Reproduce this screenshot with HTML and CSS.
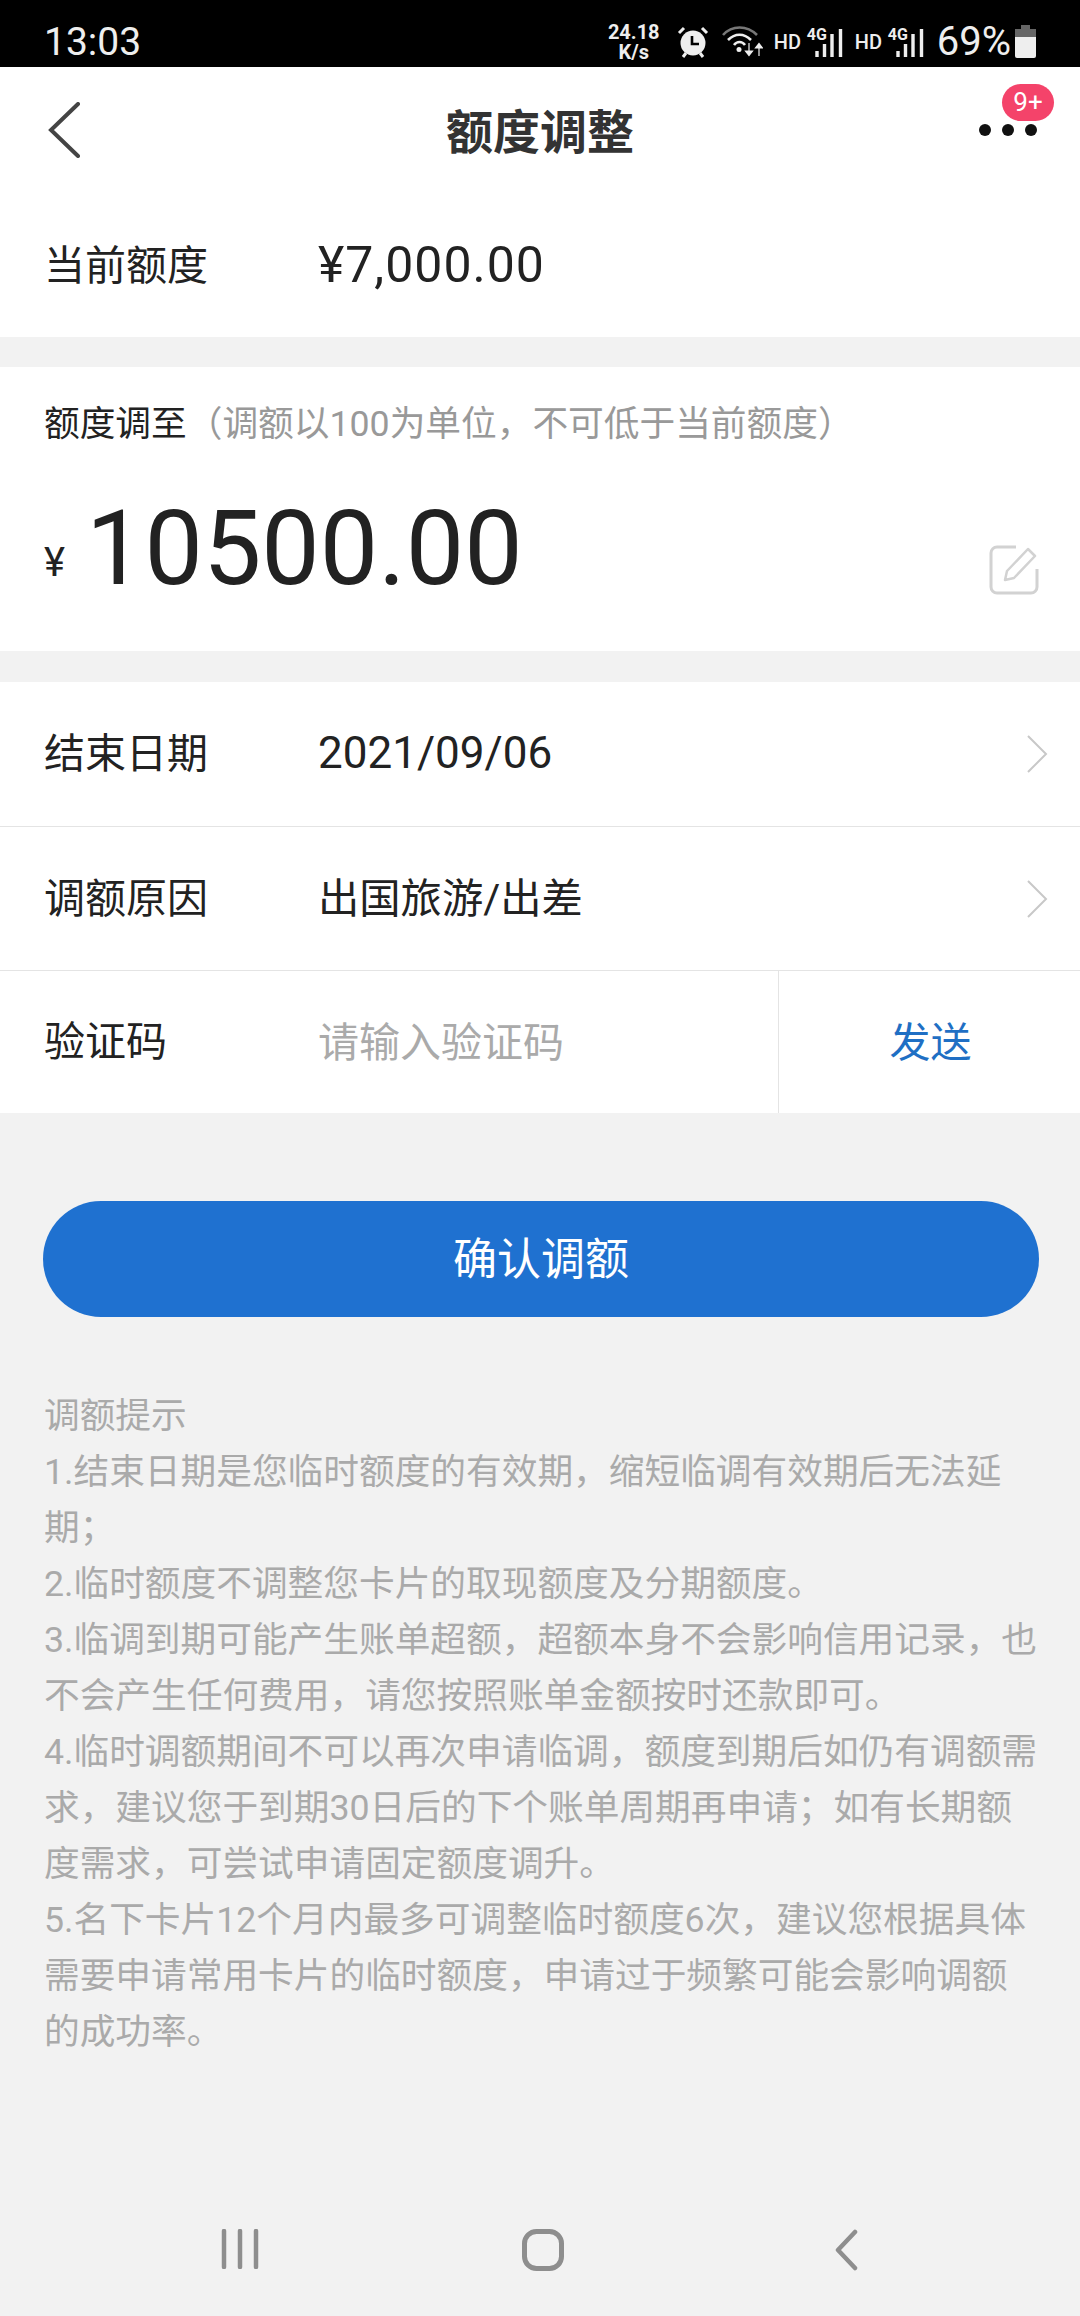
FILE: index.html
```html
<!DOCTYPE html>
<html lang="zh">
<head>
    <meta charset="UTF-8">
    <meta name="viewport" content="width=device-width, initial-scale=1.0">
    <title>额度调整</title>
    <link rel="stylesheet" href="styles.css">
</head>
<body>

    <div class="status-bar">
        <span class="clock">13:03</span>
        <div class="status-icons">
            <div class="net-speed">24.18<br>K/s</div>
            <svg class="alarm" width="32" height="32" viewBox="0 0 32 32">
                <circle cx="16" cy="17" r="12.5" fill="#eee"/>
                <path d="M15 10v8h7" fill="none" stroke="#000" stroke-width="2.6"/>
                <path d="M2 7l5-5M30 7l-5-5" stroke="#eee" stroke-width="3"/>
                <path d="M6 31l3-4M26 31l-3-4" stroke="#eee" stroke-width="3"/>
            </svg>
            <svg class="wifi" width="41" height="32" viewBox="0 0 41 32">
                <path d="M1 9C10 -1 25 -1 35 9" fill="none" stroke="#777" stroke-width="2.6"/>
                <path d="M6 14C13 7 22 7 29 14" fill="none" stroke="#eee" stroke-width="2.6"/>
                <path d="M12 19C15 15 20 15 23 19" fill="none" stroke="#eee" stroke-width="2.6"/>
                <circle cx="17" cy="23.500" r="2.500" fill="#eee"/>
                <path d="M27 17v8M23.500 25h7l-3.500 4.500zM37 30v-8M33.500 22h7l-3.500-4.500z" fill="#eee" stroke="#eee" stroke-width="1.200"/>
            </svg>
            <span class="hd">HD</span>
            <div class="signal">
                <span class="four-g">4G</span>
                <svg width="38" height="32" viewBox="0 0 38 32">
                    <path d="M12 25v6M19.500 18v13M27 8v23M35.500 3v28" stroke="#eee" stroke-width="3.400"/>
                </svg>
            </div>
            <span class="hd">HD</span>
            <div class="signal">
                <span class="four-g">4G</span>
                <svg width="38" height="32" viewBox="0 0 38 32">
                    <path d="M12 25v6M19.500 18v13M27 8v23M35.500 3v28" stroke="#eee" stroke-width="3.400"/>
                </svg>
            </div>
            <span class="battery-text">69%</span>
            <svg class="battery" width="21" height="33" viewBox="0 0 21 33">
                <path d="M6 0h9v4h6v8H0V4h6z" fill="#666"/>
                <path d="M0 12h21v19a2 2 0 0 1-2 2H2a2 2 0 0 1-2-2z" fill="#eee"/>
            </svg>
        </div>
    </div>

    <div class="nav-bar">
        <svg class="back" width="34" height="56" viewBox="0 0 34 56">
            <path d="M31 2L4 28l27 26" fill="none" stroke="#444" stroke-width="4" stroke-linecap="round"/>
        </svg>
        <h1>额度调整</h1>
        <div class="more">
            <i></i><i></i><i></i>
            <span class="badge">9+</span>
        </div>
    </div>

    <div class="row current">
        <span class="label">当前额度</span>
        <span class="current-value">¥7,000.00</span>
    </div>

    <div class="amount-card">
        <div class="amount-title">额度调至<span class="hint">（调额以100为单位，不可低于当前额度）</span></div>
        <div class="amount-row">
            <span class="yen">¥</span>
            <span class="amount">10500.00</span>
            <svg class="edit" width="50" height="50" viewBox="0 0 50 50">
                <path d="M27 2H8a6 6 0 0 0-6 6v34a6 6 0 0 0 6 6h34a6 6 0 0 0 6-6V24" fill="none" stroke="#d2d2d2" stroke-width="3"/>
                <path d="M16 35l2-9L39 4l7 7-21 22z" fill="none" stroke="#d2d2d2" stroke-width="2.500" stroke-linejoin="round"/>
            </svg>
        </div>
    </div>

    <div class="form">
        <div class="row">
            <span class="label">结束日期</span>
            <span class="value date">2021/09/06</span>
            <svg class="chevron" width="21" height="38" viewBox="0 0 21 38">
                <path d="M1 1l18 18L1 37" fill="none" stroke="#c8c8c8" stroke-width="2"/>
            </svg>
        </div>
        <div class="row">
            <span class="label">调额原因</span>
            <span class="value">出国旅游/出差</span>
            <svg class="chevron" width="21" height="38" viewBox="0 0 21 38">
                <path d="M1 1l18 18L1 37" fill="none" stroke="#c8c8c8" stroke-width="2"/>
            </svg>
        </div>
        <div class="row last">
            <span class="label">验证码</span>
            <span class="value placeholder">请输入验证码</span>
            <span class="send">发送</span>
        </div>
    </div>

    <button class="confirm">确认调额</button>

    <div class="tips">
        <p>调额提示</p>
        <p>1.结束日期是您临时额度的有效期，缩短临调有效期后无法延期；</p>
        <p>2.临时额度不调整您卡片的取现额度及分期额度。</p>
        <p>3.临调到期可能产生账单超额，超额本身不会影响信用记录，也不会产生任何费用，请您按照账单金额按时还款即可。</p>
        <p>4.临时调额期间不可以再次申请临调，额度到期后如仍有调额需求，建议您于到期30日后的下个账单周期再申请；如有长期额度需求，可尝试申请固定额度调升。</p>
        <p>5.名下卡片12个月内最多可调整临时额度6次，建议您根据具体需要申请常用卡片的临时额度，申请过于频繁可能会影响调额的成功率。</p>
    </div>

    <div class="system-nav">
        <svg width="38" height="40" viewBox="0 0 38 40">
            <path d="M3 2v36M19 2v36M35 2v36" stroke="#8e8e8e" stroke-width="4.500" stroke-linecap="round"/>
        </svg>
        <svg width="42" height="42" viewBox="0 0 42 42">
            <rect x="2.500" y="2.500" width="37" height="37" rx="12" fill="none" stroke="#8e8e8e" stroke-width="5"/>
        </svg>
        <svg width="24" height="42" viewBox="0 0 24 42">
            <path d="M21 3L4 21l17 18" fill="none" stroke="#8e8e8e" stroke-width="4.500" stroke-linecap="round" stroke-linejoin="round"/>
        </svg>
    </div>

</body>
</html>
```

FILE: styles.css
```css
* {
    box-sizing: border-box;
}
body {
    font-family: Roboto, "Noto Sans CJK SC", sans-serif;
    background-color: #f2f2f2;
    color: #222;
    margin: 0;
    width: 1080px;
    height: 2316px;
    overflow: hidden;
    display: flex;
    flex-direction: column;
}
.status-bar {
    height: 67px;
    flex: none;
    background-color: #000;
    color: #eee;
    display: flex;
    align-items: center;
    justify-content: space-between;
    padding: 16px 44px 0;
}
.clock {
    font-size: 39px;
}
.status-icons {
    display: flex;
    align-items: center;
}
.net-speed {
    font-size: 20px;
    font-weight: 700;
    line-height: 20px;
    text-align: center;
    width: 56px;
    margin-right: 15px;
}
.wifi {
    margin: 0 11px 0 13px;
}
.hd {
    font-size: 20px;
    font-weight: 500;
    width: 27px;
}
.signal {
    position: relative;
    width: 38px;
    height: 32px;
    margin: 0 12px 0 4px;
}
.four-g {
    position: absolute;
    left: 2px;
    top: -1px;
    font-size: 16px;
    font-weight: 700;
}
.battery-text {
    font-size: 40px;
    margin: 0 4px 0 1px;
}
.nav-bar {
    height: 128px;
    flex: none;
    background-color: #fff;
    position: relative;
    display: flex;
    align-items: center;
    justify-content: center;
}
.nav-bar h1 {
    color: #333;
    font-size: 47px;
    font-weight: 700;
    margin: 0 0 5px;
}
.back {
    position: absolute;
    left: 47px;
    top: 35px;
}
.more {
    position: absolute;
    left: 979px;
    top: 57px;
    display: flex;
    gap: 11px;
}
.more i {
    width: 12px;
    height: 12px;
    border-radius: 50%;
    background-color: #111;
}
.badge {
    position: absolute;
    left: 23px;
    top: -40px;
    width: 52px;
    height: 37px;
    border-radius: 19px;
    background-color: #f4436a;
    color: #fff;
    font-size: 26px;
    line-height: 37px;
    text-align: center;
}
.row {
    background-color: #fff;
    display: flex;
    align-items: center;
    padding-left: 44px;
    height: 144px;
    position: relative;
    font-size: 41px;
}
.row + .row {
    border-top: 1px solid #e4e4e4;
}
.row.last {
    height: 143px;
}
.current {
    height: 142px;
}
.label {
    width: 274px;
    flex: none;
    color: #222;
    padding-bottom: 8px;
}
.current-value {
    font-size: 50px;
    letter-spacing: 1px;
    padding-bottom: 3px;
}
.value {
    font-size: 41.300px;
    flex: 1;
    padding-bottom: 7px;
}
.date {
    font-size: 44px;
    padding-bottom: 3px;
}
.placeholder {
    font-size: 41px;
    color: #aaa;
}
.chevron {
    margin-right: 32px;
}
.send {
    width: 302px;
    align-self: stretch;
    display: flex;
    align-items: center;
    justify-content: center;
    color: #1f6fc4;
    border-left: 1px solid #e4e4e4;
    padding: 0 0 7px 2px;
}
.amount-card {
    background-color: #fff;
    margin-top: 30px;
    height: 284px;
    padding: 0 42px 0 44px;
}
.amount-title {
    font-size: 35.700px;
    padding-top: 31px;
    line-height: 52px;
}
.hint {
    color: #999;
}
.amount-row {
    display: flex;
    align-items: flex-end;
    margin-top: 39px;
}
.yen {
    font-size: 40px;
    margin: 0 21px 23px 0;
}
.amount {
    font-size: 104px;
    line-height: 120px;
    flex: 1;
}
.edit {
    margin-bottom: 14px;
    margin-right: -1px;
}
.form {
    margin-top: 31px;
}
.confirm {
    display: block;
    flex: none;
    margin: 88px 41px 0 43px;
    height: 116px;
    border: none;
    border-radius: 58px;
    background-color: #1f71d0;
    color: #fff;
    font-family: inherit;
    font-size: 44px;
    padding: 0 0 6px;
}
.tips {
    margin: 71px 41px 0 44px;
    font-size: 35.700px;
    line-height: 56px;
    color: #aaa;
}
.tips p {
    margin: 0;
}
.system-nav {
    margin-top: auto;
    height: 87px;
    position: relative;
    flex: none;
}
.system-nav svg {
    position: absolute;
    top: 0;
}
.system-nav svg:nth-child(1) {
    left: 221px;
}
.system-nav svg:nth-child(2) {
    left: 522px;
}
.system-nav svg:nth-child(3) {
    left: 834px;
}
```
